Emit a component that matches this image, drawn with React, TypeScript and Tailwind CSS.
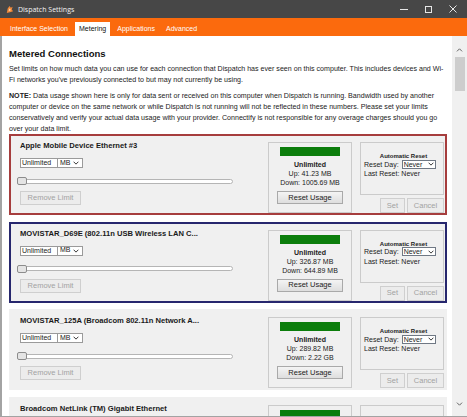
import { ReactNode } from 'react';

type Conn = {
  name: string;
  up: string;
  down: string;
  border: string;
};

const connections: Conn[] = [
  { name: 'Apple Mobile Device Ethernet #3', up: '41.23 MB', down: '1005.69 MB', border: 'border-[#a63d3d]' },
  { name: 'MOVISTAR_D69E (802.11n USB Wireless LAN C...', up: '326.87 MB', down: '644.89 MB', border: 'border-[#27276e]' },
  { name: 'MOVISTAR_125A (Broadcom 802.11n Network A...', up: '289.82 MB', down: '2.22 GB', border: 'border-transparent' },
  { name: 'Broadcom NetLink (TM) Gigabit Ethernet', up: '0.00 MB', down: '0.00 MB', border: 'border-transparent' },
];

function Chevron({ className = '' }: { className?: string }) {
  return (
    <svg viewBox="0 0 8 5" className={className} fill="none" stroke="currentColor" strokeWidth="1.2">
      <path d="M0.8 0.8 L4 4 L7.2 0.8" />
    </svg>
  );
}

function Btn({ children, disabled, className = '' }: { children: ReactNode; disabled?: boolean; className?: string }) {
  return (
    <div
      className={
        'flex items-center justify-center border text-[7.5px] leading-none ' +
        (disabled
          ? 'border-[#cfcfcf] bg-[#ececec] text-[#a2a2a2] '
          : 'border-[#a9a9a9] bg-gradient-to-b from-[#f4f4f4] to-[#dedede] text-[#222] ') +
        className
      }
    >
      {children}
    </div>
  );
}

function Card({ c }: { c: Conn }) {
  return (
    <div className={'flex shrink-0 h-[81px] border-2 bg-[#f0f0f0] pt-[5px] pr-[1px] ' + c.border}>
      {/* limit controls */}
      <div className="flex-1 flex flex-col pl-[9px]">
        <div className="h-[10px] text-[7.6px] leading-[10px] font-bold text-[#1a1a1a] whitespace-nowrap">{c.name}</div>
        <div className="flex mt-[7px] h-[10px]">
          <div className="w-[38px] border border-[#9a9a9a] bg-white text-[7px] leading-[8px] pl-[1px] text-[#222]">Unlimited</div>
          <div className="w-[25px] border border-l-0 border-[#9a9a9a] bg-white flex items-center gap-[2px] pl-[2px] text-[7px] text-[#222]">
            MB
            <Chevron className="w-[6px] h-[4px]" />
          </div>
        </div>
        <div className="relative mt-[9px] ml-[-3px] w-[216px] h-[8px] flex items-center">
          <div className="w-full h-[5px] rounded-full border border-[#b5b5b5] bg-white" />
          <div className="absolute left-0 top-0 w-[10px] h-[8px] rounded-[2px] border border-[#8c8c8c] bg-[#e4e4e4]" />
        </div>
        <Btn disabled className="mt-[6px] w-[61px] h-[14px]">Remove Limit</Btn>
      </div>

      {/* usage */}
      <div className="mt-[1px] w-[84px] h-[71px] border border-[#cbcbcb] flex flex-col items-center mr-[8px]">
        <div className="mt-[4px] w-[60px] h-[9px] bg-[#0b7d0b]" />
        <div className="mt-[4px] text-[7px] leading-[9px] text-center text-[#222]">
          <div className="font-bold">Unlimited</div>
          <div>Up: {c.up}</div>
          <div>Down: {c.down}</div>
        </div>
        <Btn className="mt-[4px] w-[66px] h-[13px]">Reset Usage</Btn>
      </div>

      {/* automatic reset */}
      <div className="mt-[1px] w-[84px] flex flex-col">
        <div className="h-[53px] border border-[#cbcbcb] pl-[3px] text-[7px] text-[#222]">
          <div className="mt-[9px] text-center text-[6px] leading-[8px] font-bold">Automatic Reset</div>
          <div className="flex items-center h-[10px] mt-[-1px]">
            <span className="leading-none">Reset Day:</span>
            <div className="ml-[3px] w-[34px] h-[9px] border border-[#6f7884] bg-white flex items-center justify-between px-[1px] leading-none">
              Never
              <Chevron className="w-[6px] h-[4px]" />
            </div>
          </div>
          <div className="leading-[10px]">Last Reset: Never</div>
        </div>
        <div className="flex justify-end gap-[2px] mt-[3px]">
          <Btn disabled className="w-[25px] h-[15px]">Set</Btn>
          <Btn disabled className="w-[37px] h-[15px]">Cancel</Btn>
        </div>
      </div>
    </div>
  );
}

export default function App() {
  return (
    <div className="w-[467px] h-[417px] overflow-hidden bg-white flex flex-col font-['Liberation_Sans',Arial,sans-serif]">
      {/* title bar */}
      <div className="h-[18px] shrink-0 bg-[#474747] flex items-center text-white">
        <svg viewBox="0 0 10 10" className="ml-[5px] w-[9px] h-[9px]">
          <path d="M2 9 L3 4 L5 1 L6.5 3 L8.5 2 L7.5 5 L9 7 L5.5 8 Z" fill="#f28a3a" />
          <path d="M4 7 L5 4 L6.5 5.5 Z" fill="#fde0c0" />
        </svg>
        <span className="ml-[4px] text-[7px] leading-none text-[#f2f2f2] font-['Open_Sans','Liberation_Sans',sans-serif]">Dispatch Settings</span>
        <div className="ml-auto flex items-center gap-[17px] mr-[10px] text-[#e6e6e6]">
          <div className="w-[8px] h-px bg-current" />
          <div className="w-[7px] h-[7px] border border-current" />
          <svg viewBox="0 0 8 8" className="w-[8px] h-[8px]" stroke="currentColor" strokeWidth="1">
            <path d="M0.5 0.5 L7.5 7.5 M7.5 0.5 L0.5 7.5" />
          </svg>
        </div>
      </div>

      {/* tabs */}
      <div className="h-[18px] shrink-0 bg-[#fb6a0d] flex items-end pl-[6px] gap-[3px] text-[7px] text-white">
        <div className="h-[14px] px-[4px] flex items-center">Interface Selection</div>
        <div className="h-[14px] px-[4px] flex items-center bg-white text-[#111]">Metering</div>
        <div className="h-[14px] px-[4px] flex items-center">Applications</div>
        <div className="h-[14px] px-[4px] flex items-center">Advanced</div>
      </div>

      {/* body */}
      <div className="flex-1 min-h-0 flex border-l-2 border-b border-[#a3a3a3]">
        <div className="flex-1 min-w-0 overflow-hidden pl-[7px] pr-[5px] flex flex-col">
          <h1 className="mt-[12px] text-[9.5px] leading-[12px] font-bold text-[#111]">Metered Connections</h1>
          <p className="mt-[4px] text-[7.1px] leading-[11px] text-[#222]">
            Set limits on how much data you can use for each connection that Dispatch has ever seen on this computer. This includes devices and Wi-
            <br />
            Fi networks you've previously connected to but may not currently be using.
          </p>
          <p className="mt-[5px] text-[7.1px] leading-[11px] text-[#222]">
            <b>NOTE:</b> Data usage shown here is only for data sent or received on this computer when Dispatch is running. Bandwidth used by another computer or device on the same network or while Dispatch is not running will not be reflected in these numbers. Please set your limits conservatively and verify your actual data usage with your provider. Connectify is not responsible for any overage charges should you go over your data limit.
          </p>
          <div className="mt-[-1px] flex flex-col gap-[6.5px]">
            {connections.map((c) => (
              <Card key={c.name} c={c} />
            ))}
          </div>
        </div>

        {/* scrollbar */}
        <div className="w-[15px] shrink-0 bg-[#f0f0f0] flex flex-col items-center text-[#5f5f5f]">
          <Chevron className="mt-[12px] w-[7px] h-[4px] rotate-180" />
          <div className="mt-[5px] w-[10px] h-[34px] bg-[#cdcdcd]" />
          <div className="flex-1" />
          <Chevron className="mb-[10px] w-[7px] h-[4px]" />
        </div>
      </div>
    </div>
  );
}
